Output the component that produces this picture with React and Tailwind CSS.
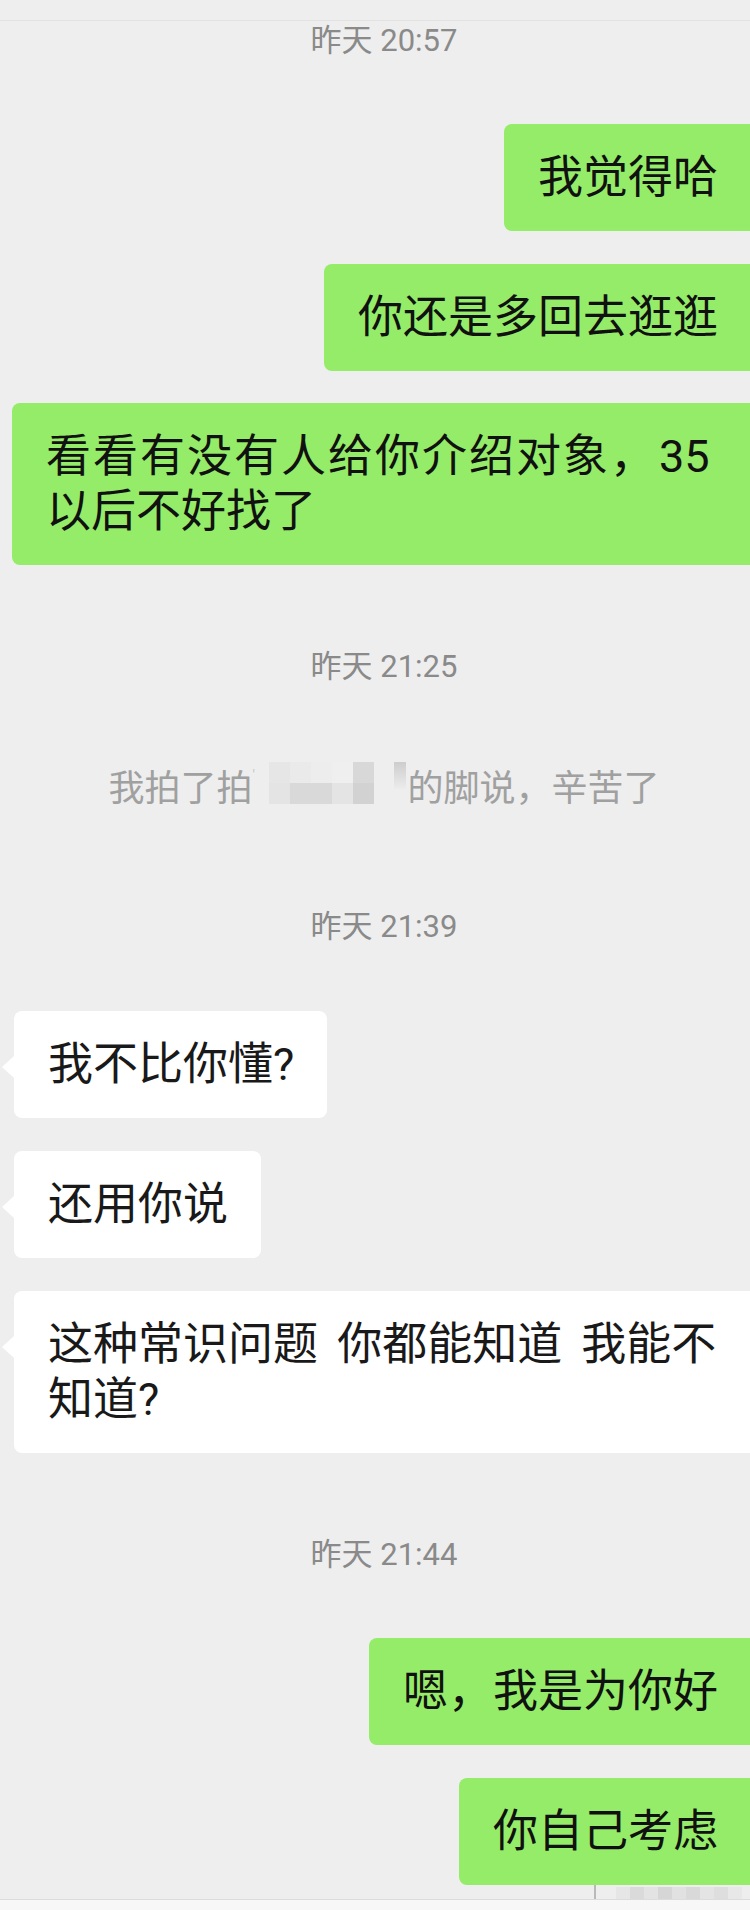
import React from 'react'

const font = "font-['Roboto','Noto_Sans_CJK_SC',sans-serif]"

function Time({ children, className = '' }) {
  return (
    <div className={`pl-[18px] text-center text-[31px] leading-[40px] text-[#8a8a8a] ${className}`}>
      {children}
    </div>
  )
}

function Mine({ children, className = '', block = false }) {
  return (
    <div className={`flex justify-end ${className}`}>
      <div
        className={`whitespace-nowrap rounded-l-lg bg-[#95ec69] py-[26px] pl-[34px] pr-[32px] text-[45px] leading-[55px] text-[#111] [word-spacing:8px] ${
          block ? 'ml-[12px] flex-1' : ''
        }`}
      >
        {children}
      </div>
    </div>
  )
}

function Theirs({ children, className = '', block = false }) {
  return (
    <div className={`flex ${className}`}>
      <div
        className={`relative whitespace-nowrap ml-[14px] rounded-lg bg-white py-[26px] pl-[34px] pr-[33px] text-[45px] leading-[55px] text-[#191919] [word-spacing:8px] ${
          block ? 'flex-1 rounded-r-none' : ''
        }`}
      >
        <span className="absolute -left-[12px] top-[45px] h-0 w-0 border-y-[11px] border-r-[12px] border-y-transparent border-r-white" />
        {children}
      </div>
    </div>
  )
}

// pixel mosaic hiding the nickname
const mosaic = [
  ['#e6e6e6', '#eaeaea', '#ededed', '#efefef', '#d8d8d8'],
  ['#e4e4e4', '#d9d9d9', '#d9d9d9', '#e4e4e4', '#d2d2d2'],
]

function Mosaic() {
  return (
    <div className="-mt-[3px] flex h-[42px] w-[155px] items-start">
      <span className="w-[16px] pt-[6px] text-[14px] leading-none text-[#c8c8c8]">'</span>
      <div className="flex flex-col">
        {mosaic.map((row, i) => (
          <div key={i} className="flex">
            {row.map((c, j) => (
              <div key={j} className="h-[21px] w-[21px]" style={{ background: c }} />
            ))}
          </div>
        ))}
      </div>
      <div className="ml-[20px] h-[27px] w-[12px] bg-gradient-to-b from-[#cdcdcd] to-[#ececec]" />
    </div>
  )
}

const bottomBlur = ['#e6e6e6', '#dadada', '#e3e3e3', '#d6d6d6', '#e1e1e1', '#d9d9d9', '#e4e4e4', '#dedede', '#e8e8e8']

export default function App() {
  return (
    <div className={`min-h-screen w-[750px] overflow-hidden bg-[#eeeeee] ${font}`}>
      <div className="h-[21px] border-b border-[#e2e2e2]" />

      <Time>昨天 20:57</Time>

      <Mine className="mt-[63px]">我觉得哈</Mine>
      <Mine className="mt-[33px]">你还是多回去逛逛</Mine>
      <Mine className="mt-[32px]" block>
        <span className="tracking-[2px]">看看有没有人给你介绍对象，</span>
        <span className="ml-[2px]">35</span>
        <br />
        以后不好找了
      </Mine>

      <Time className="mt-[82px]">昨天 21:25</Time>

      <div className="mt-[78px] flex items-start justify-center pl-[18px] text-[36px] leading-[48px] text-[#a0a0a0]">
        <span>我拍了拍</span>
        <Mosaic />
        <span>的脚说，辛苦了</span>
      </div>

      <Time className="mt-[94px]">昨天 21:39</Time>

      <Theirs className="mt-[64px]">我不比你懂?</Theirs>
      <Theirs className="mt-[33px]">还用你说</Theirs>
      <Theirs className="mt-[33px]" block>
        这种常识问题 你都能知道 我能不
        <br />
        知道?
      </Theirs>

      <Time className="mt-[82px]">昨天 21:44</Time>

      <Mine className="mt-[63px]">嗯，我是为你好</Mine>
      <Mine className="mt-[33px]">你自己考虑</Mine>

      <div className="flex h-[14px] items-end justify-end pr-[8px]">
        <div className="mr-[20px] h-[14px] w-[2px] bg-[#b9b9b9]" />
        {bottomBlur.map((c, i) => (
          <div key={i} className="h-[12px] w-[14px]" style={{ background: c }} />
        ))}
      </div>
      <div className="h-[40px] border-t border-[#dcdcdc] bg-[#f7f7f7]" />
    </div>
  )
}
